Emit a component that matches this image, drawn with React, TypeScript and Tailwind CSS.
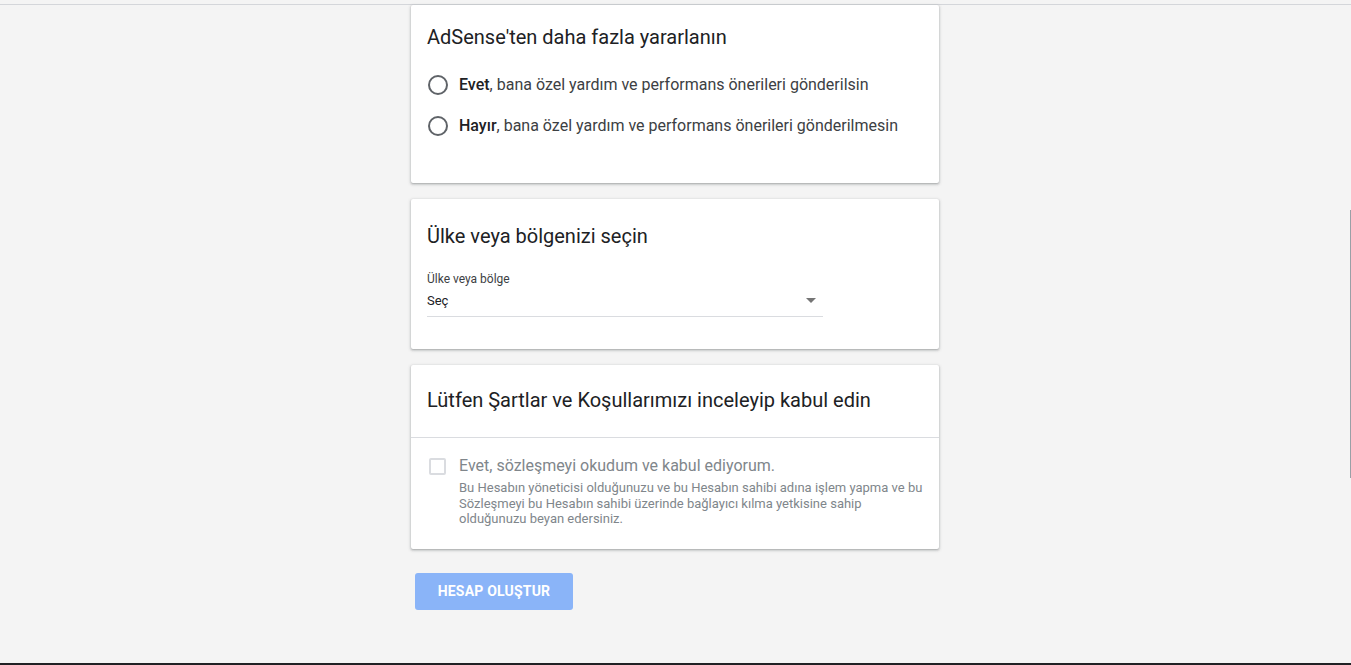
import React from 'react';

const cardClass =
  'bg-white rounded-[2px] shadow-[0_1px_2px_0_rgba(60,64,67,0.3),0_1px_3px_1px_rgba(60,64,67,0.15)]';

const Radio: React.FC<{ bold: string; rest: string }> = ({ bold, rest }) => (
  <label className="flex items-center h-[41px] cursor-pointer">
    <span className="w-[20px] h-[20px] rounded-full border-2 border-[#5f6368] ml-[1px] mr-[11px] shrink-0" />
    <span className="text-[16px] text-[#3c4043]">
      <span className="font-medium text-[#202124]">{bold}</span>
      {rest}
    </span>
  </label>
);

const App: React.FC = () => {
  return (
    <div
      className="relative h-[665px] overflow-hidden bg-[#f4f4f4] border-b-2 border-[#202124]"
      style={{ fontFamily: 'Roboto, "Liberation Sans", Arial, sans-serif' }}
    >
      <div className="h-[5px] bg-[#f4f4f4] border-b border-[#d4d6da]" />

      <div className="w-[528px] ml-[411px] flex flex-col gap-4">
        {/* Card 1 */}
        <div className={`${cardClass} px-4 pt-[18px] pb-[37px]`}>
          <h2 className="text-[20px] leading-[28px] font-normal text-[#202124] mb-[13px]">
            AdSense'ten daha fazla yararlanın
          </h2>
          <Radio bold="Evet" rest=", bana özel yardım ve performans önerileri gönderilsin" />
          <Radio bold="Hayır" rest=", bana özel yardım ve performans önerileri gönderilmesin" />
        </div>

        {/* Card 2 */}
        <div className={`${cardClass} px-4 pt-[23px] pb-[32px]`}>
          <h2 className="text-[20px] leading-[28px] font-normal text-[#202124] mb-[21px]">
            Ülke veya bölgenizi seçin
          </h2>
          <div className="w-[396px]">
            <div className="text-[12px] leading-[16px] text-[#3c4043]">Ülke veya bölge</div>
            <div className="flex items-center justify-between h-[30px] border-b border-[#dadce0]">
              <span className="text-[13px] text-[#202124] -mt-[2px]">Seç</span>
              <svg width="10" height="5" viewBox="0 0 10 5" className="mr-[7px] -mt-[2px]">
                <path d="M0 0h10L5 5z" fill="#757575" />
              </svg>
            </div>
          </div>
        </div>

        {/* Card 3 */}
        <div className={cardClass}>
          <div className="px-4 pt-[21px] pb-[23px] border-b border-[#dadce0]">
            <h2 className="text-[20px] leading-[28px] font-normal text-[#202124]">
              Lütfen Şartlar ve Koşullarımızı inceleyip kabul edin
            </h2>
          </div>
          <div className="flex px-4 pt-[19px] pb-[22px]">
            <span className="w-[17px] h-[17px] mt-[1px] ml-[2px] mr-[13px] rounded-[2px] border-2 border-[#dadce0] shrink-0" />
            <div>
              <div className="text-[16px] leading-[18px] text-[#80868b]">
                Evet, sözleşmeyi okudum ve kabul ediyorum.
              </div>
              <p className="mt-[5px] text-[13px] leading-[15.5px] text-[#80868b]">
                Bu Hesabın yöneticisi olduğunuzu ve bu Hesabın sahibi adına işlem yapma ve bu
                Sözleşmeyi bu Hesabın sahibi üzerinde bağlayıcı kılma yetkisine sahip olduğunuzu
                beyan edersiniz.
              </p>
            </div>
          </div>
        </div>

        <div className="pt-[8px]">
          <button className="ml-[4px] w-[158px] h-[37px] rounded-[3px] bg-[#8ab4f8] text-white text-[14px] font-bold tracking-[0.2px]">
            HESAP OLUŞTUR
          </button>
        </div>
      </div>

      {/* scrollbar thumb */}
      <div className="absolute right-0 top-[210px] w-[1px] h-[268px] bg-[#9aa0a6]" />
    </div>
  );
};

export default App;
